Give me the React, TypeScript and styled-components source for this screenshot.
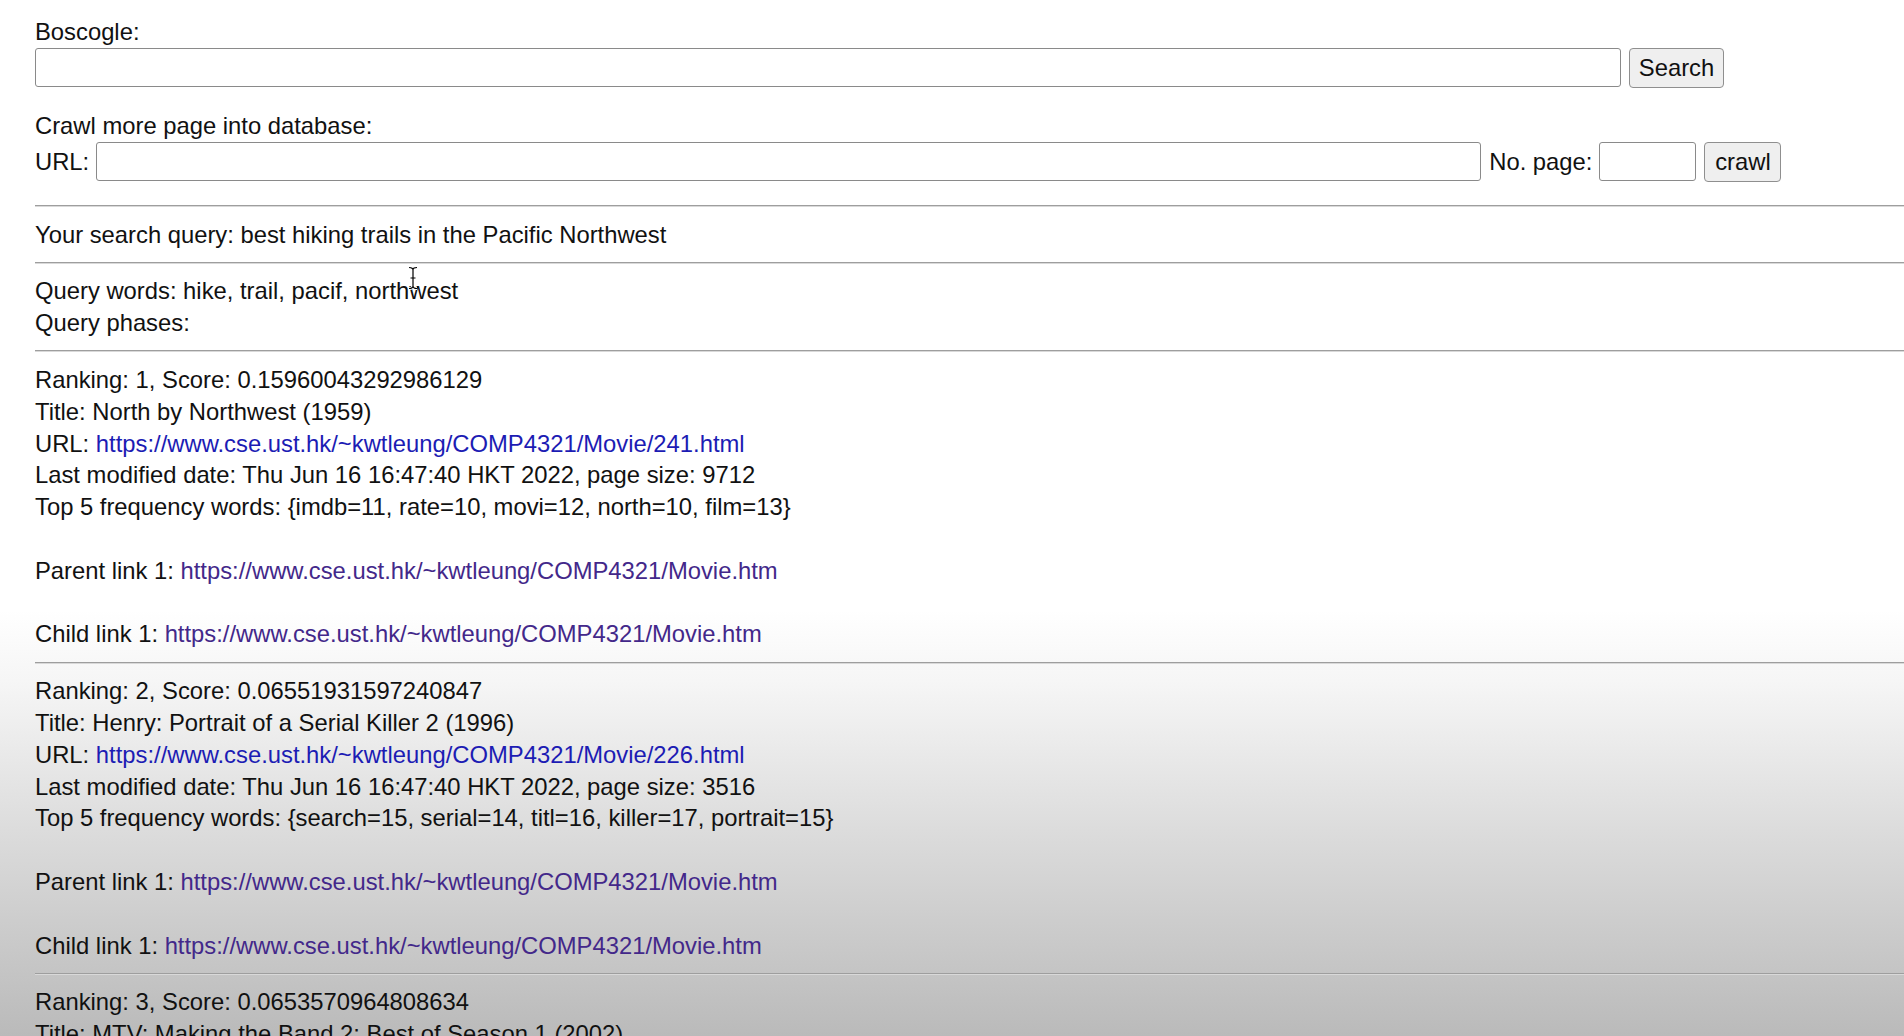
import styled, { createGlobalStyle } from 'styled-components';

const GlobalStyle = createGlobalStyle`
    html, body {
        margin: 0;
        padding: 0;
    }

    html {
        min-height: 100%;
        background: linear-gradient(to bottom, #ffffff 0px, #ffffff 610px, #f6f6f6 680px, #dcdcdc 830px, #bababa 1036px);
        background-repeat: no-repeat;
        background-color: #bababa;
    }

    body {
        font-family: "Liberation Sans", Arial, Helvetica, sans-serif;
        font-size: 23.8px;
        line-height: 31.8px;
        color: #111;
        overflow: hidden;
    }
`;

const Page = styled.div`
    position: relative;
    padding: 16px 0 0 35px;
    height: 1020px;
    overflow: hidden;
`;

const SearchForm = styled.form`
    margin: 0;
    padding-bottom: 12px;
`;

const Label = styled.div`
    height: 31.8px;
`;

const FieldRow = styled.div<{ $mb?: number }>`
    display: flex;
    align-items: center;
    height: 40px;
    margin-bottom: ${({ $mb }) => $mb ?? 0}px;
`;

const InlineLabel = styled.span`
    margin-right: 7px;
    white-space: nowrap;
`;

const TextInput = styled.input<{ $w: number }>`
    box-sizing: border-box;
    width: ${({ $w }) => $w}px;
    height: 39px;
    border: 1px solid #8a8a8a;
    border-radius: 3px;
    background: #fff;
    font: inherit;
    padding: 0 6px;
    margin: 0 8px 0 0;
    outline: none;
`;

const Button = styled.button<{ $w: number }>`
    box-sizing: border-box;
    width: ${({ $w }) => $w}px;
    height: 40px;
    border: 1px solid #8f8f8f;
    border-radius: 4px;
    background: #efefef;
    color: #111;
    font: inherit;
    padding: 0;
    margin: 0;
`;

const Divider = styled.hr`
    height: 0;
    border: none;
    border-top: 1px solid #9e9e9e;
    border-bottom: 1px solid #d9d9d9;
    margin: 11.5px 0;
`;

const Block = styled.div``;

const Line = styled.div`
    min-height: 31.8px;
    white-space: nowrap;
`;

const Link = styled.a<{ $visited?: boolean }>`
    color: ${({ $visited }) => ($visited ? '#43288a' : '#1c1cb4')};
    text-decoration: none;
`;

const Cursor = styled.svg`
    position: absolute;
    left: 407px;
    top: 266px;
    pointer-events: none;
`;

type Result = {
    rank: number;
    score: string;
    title: string;
    url: string;
    size: number;
    words: string;
};

const parentUrl = 'https://www.cse.ust.hk/~kwtleung/COMP4321/Movie.htm';

const results: Result[] = [
    {
        rank: 1,
        score: '0.15960043292986129',
        title: 'North by Northwest (1959)',
        url: 'https://www.cse.ust.hk/~kwtleung/COMP4321/Movie/241.html',
        size: 9712,
        words: '{imdb=11, rate=10, movi=12, north=10, film=13}',
    },
    {
        rank: 2,
        score: '0.06551931597240847',
        title: 'Henry: Portrait of a Serial Killer 2 (1996)',
        url: 'https://www.cse.ust.hk/~kwtleung/COMP4321/Movie/226.html',
        size: 3516,
        words: '{search=15, serial=14, titl=16, killer=17, portrait=15}',
    },
    {
        rank: 3,
        score: '0.0653570964808634',
        title: 'MTV: Making the Band 2: Best of Season 1 (2002)',
        url: 'https://www.cse.ust.hk/~kwtleung/COMP4321/Movie/172.html',
        size: 4102,
        words: '{band=12, make=10, mtv=11, season=9, best=8}',
    },
];

const ResultItem = ({ r }: { r: Result }) => (
    <Block>
        <Line>Ranking: {r.rank}, Score: {r.score}</Line>
        <Line>Title: {r.title}</Line>
        <Line>
            URL: <Link href={r.url}>{r.url}</Link>
        </Line>
        <Line>Last modified date: Thu Jun 16 16:47:40 HKT 2022, page size: {r.size}</Line>
        <Line>Top 5 frequency words: {r.words}</Line>
        <Line />
        <Line>
            Parent link 1: <Link $visited href={parentUrl}>{parentUrl}</Link>
        </Line>
        <Line />
        <Line>
            Child link 1: <Link $visited href={parentUrl}>{parentUrl}</Link>
        </Line>
    </Block>
);

const App = () => {
    return (
        <Page>
            <GlobalStyle />
            <SearchForm onSubmit={(e) => e.preventDefault()}>
                <Label>Boscogle:</Label>
                <FieldRow $mb={22}>
                    <TextInput $w={1586} type="text" />
                    <Button $w={95}>Search</Button>
                </FieldRow>
                <Label>Crawl more page into database:</Label>
                <FieldRow>
                    <InlineLabel>URL:</InlineLabel>
                    <TextInput $w={1385} type="text" />
                    <InlineLabel>No. page:</InlineLabel>
                    <TextInput $w={97} type="text" />
                    <Button $w={77}>crawl</Button>
                </FieldRow>
            </SearchForm>
            <Divider />
            <Block>
                <Line>Your search query: best hiking trails in the Pacific Northwest</Line>
            </Block>
            <Divider />
            <Block>
                <Line>Query words: hike, trail, pacif, northwest</Line>
                <Line>Query phases:</Line>
            </Block>
            {results.map((r) => (
                <div key={r.rank}>
                    <Divider />
                    <ResultItem r={r} />
                </div>
            ))}
            <Cursor width="12" height="24" viewBox="0 0 12 24">
                <path d="M2 1.5 Q6 1.5 6 4 Q6 1.5 10 1.5 M6 4 V20 M2 22.5 Q6 22.5 6 20 Q6 22.5 10 22.5 M3.5 12 H8.5" fill="none" stroke="#fff" strokeWidth="3" />
                <path d="M2 1.5 Q6 1.5 6 4 Q6 1.5 10 1.5 M6 4 V20 M2 22.5 Q6 22.5 6 20 Q6 22.5 10 22.5 M3.5 12 H8.5" fill="none" stroke="#000" strokeWidth="1.2" />
            </Cursor>
        </Page>
    );
};

export default App;
